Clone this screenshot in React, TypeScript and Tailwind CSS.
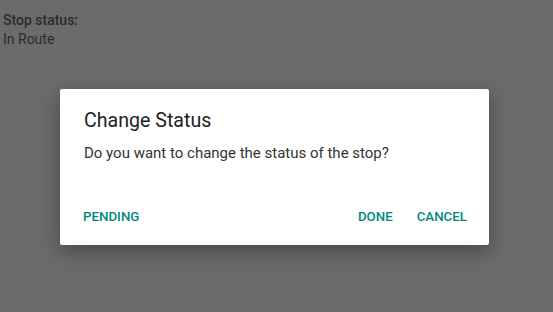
export default function App() {
  return (
    <div className="relative h-[312px] w-[553px] overflow-hidden bg-[#6b6b6b] font-['Roboto',sans-serif]">
      <div className="px-[3px] pt-[11px] text-[14px] leading-[19px] text-[#2b2b2b]">
        <div className="font-medium">Stop status:</div>
        <div>In Route</div>
      </div>

      <div className="absolute inset-0 pt-[89px] pl-[60px]">
        <div className="h-[156px] w-[429px] rounded-[2px] bg-white shadow-[0_6px_20px_rgba(0,0,0,0.35)]">
          <div className="px-[24px] pt-[19px]">
            <h2 className="text-[19.6px] font-normal leading-[26px] text-[#212121]">Change Status</h2>
            <p className="mt-[8px] text-[15px] leading-[22px] text-[#333333]">
              Do you want to change the status of the stop?
            </p>
          </div>
          <div className="mt-[35px] flex items-center px-[8px] text-[13.3px] font-medium leading-[20px] text-[#00897b]">
            <button className="px-[15px] py-[8px]">PENDING</button>
            <div className="flex-1" />
            <button className="pl-[12px] pr-[13px] py-[8px]">DONE</button>
            <button className="pl-[11px] pr-[14px] py-[8px]">CANCEL</button>
          </div>
        </div>
      </div>
    </div>
  );
}
